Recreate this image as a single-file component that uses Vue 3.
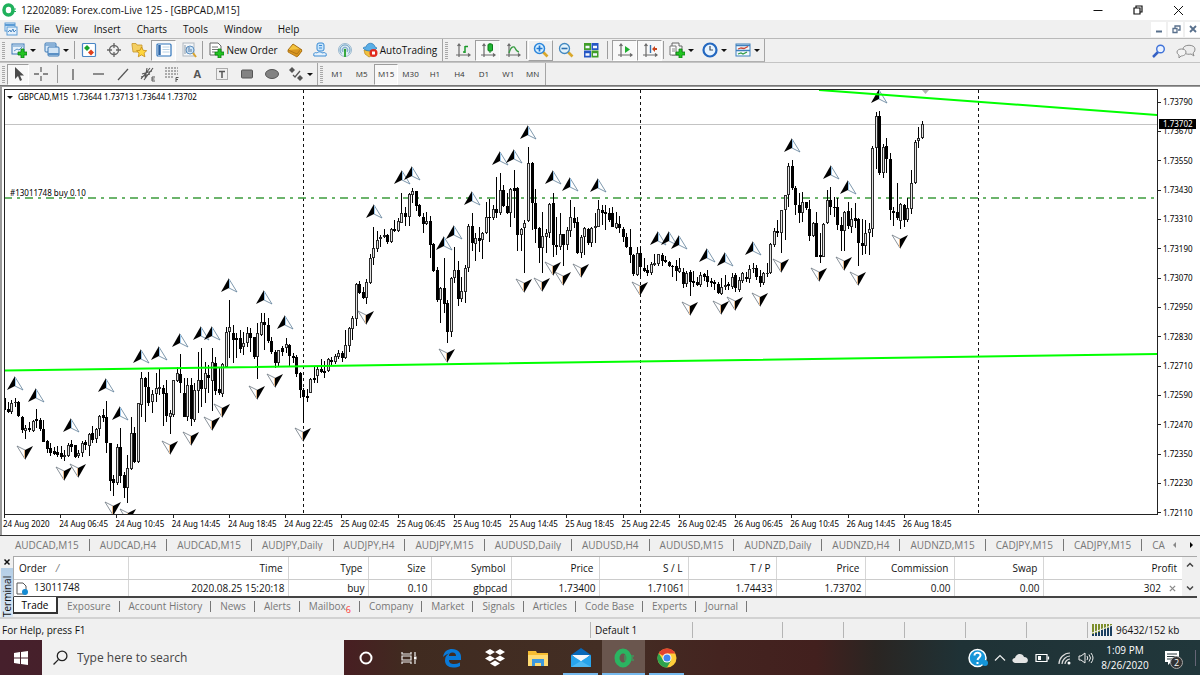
<script setup>
const menus = ['File', 'View', 'Insert', 'Charts', 'Tools', 'Window', 'Help']
const frames = ['M1', 'M5', 'M15', 'M30', 'H1', 'H4', 'D1', 'W1', 'MN']

const axes = '<path d="M4 2v13M1 13h14M2.500 4L4 2l1.500 2M13 11.500l2 1.500-2 1.500" fill="none" stroke="#6a6a6a" stroke-width="1.200"/>'
const plus = '<path d="M10 7h3v3h3v3h-3v3h-3v-3H7v-3h3z" fill="#22c322" stroke="#0b7d12" stroke-width=".8"/>'
const icons = {
  newChart: '<rect x="1" y="2" width="12" height="10" fill="#e8f2fb" stroke="#3a78b5"/><path d="M2 4h10M3 9l3-2 2 1 3-3" fill="none" stroke="#5d93c6"/>' + plus,
  profiles: '<rect x="1" y="1" width="11" height="9" rx="1" fill="#d8eafa" stroke="#3a78b5"/><path d="M1.500 3h10" stroke="#3a78b5"/><rect x="4" y="5" width="11" height="9" rx="1" fill="#d2e5f6" stroke="#3a78b5"/><path d="M4 12h11" stroke="#5a90c5" stroke-width="2"/>',
  market: '<rect x="1.500" y="1.500" width="13" height="13" rx="1" fill="#fff" stroke="#4a86c5" stroke-width="1.200"/><path d="M3 6l3-3 3 3-3 3z" fill="#18a32b"/><path d="M7 10.500l3-3 3 3-3 3z" fill="#e0401c"/>',
  target: '<circle cx="8" cy="8" r="4.500" fill="none" stroke="#666" stroke-width="1.300"/><path d="M8 1v5M8 10v5M1 8h5M10 8h5" stroke="#666" stroke-width="1.300"/>',
  favorites: '<path d="M1 3V1.500h4L6 3h5v7H2z" fill="#f4cf62" stroke="#c6952a" stroke-width=".8"/><path d="M10.500 5l1.700 3.300 3.500.4-2.600 2.400.8 3.700-3.400-1.900-3.200 1.900.7-3.700L5.500 8.700 9 8.300z" fill="#ffd63e" stroke="#c48a12" stroke-width=".8"/>',
  navigator: '<rect x="1" y="2" width="14" height="12" rx="1" fill="#fff" stroke="#2f74bb" stroke-width="1.200"/><path d="M3.500 3v10" stroke="#2862a5" stroke-width="2.500"/><path d="M6.500 5h7M6.500 7.500h7M6.500 10h7" stroke="#b9d2e6"/>',
  tester: '<rect x="2" y="1" width="11" height="13" fill="#f4f6f8" stroke="#b0b8c0"/><path d="M4 3v9M6 5v6" stroke="#8897a5"/><circle cx="9" cy="8" r="4" fill="#c6e2f8" fill-opacity=".8" stroke="#5d8fc0"/><path d="M8 5v5M10 7v3" stroke="#5676a0"/><path d="M12 11l3 4" stroke="#d9a42e" stroke-width="2"/>',
  order: '<path d="M2 1h8l3 3v9H2z" fill="#fff" stroke="#666"/><path d="M4 5h6M4 7.500h6M4 10h3" stroke="#777"/>' + plus,
  gold: '<path d="M1 8l5-6 9 6-4 6z" fill="#f4c33c" stroke="#a86f13"/><path d="M1 8l9 4 4-5M1 8v2l9 5 5-6" fill="#d99620" stroke="#a86f13" stroke-width=".8"/>',
  account: '<rect x="5" y="1" width="7" height="8" rx="2" fill="#c7e4fb" stroke="#3a8bd4"/><path d="M7 3.500h3M7 6h3" stroke="#3a8bd4"/><path d="M2 14c-1-3 1-4 3-3 2-2 4-1 5 0 3-1 5 0 4 3z" fill="#e6f2fc" stroke="#3a8bd4"/>',
  signal: '<circle cx="8" cy="8" r="6.500" fill="#dcebf2" stroke="#9bb9cf"/><path d="M4.500 11.500a5 5 0 117 0M6 10a2.800 2.800 0 114 0" fill="none" stroke="#6d9fc4"/><circle cx="8" cy="8" r="1.300" fill="#2d9c36"/><path d="M8 9v6" stroke="#38a93f" stroke-width="2"/>',
  auto: '<path d="M2 8h12l-2 5-5 2-4-3z" fill="#f2c13d" stroke="#b9851c" stroke-width=".7"/><path d="M1 6c1-1 2-1 3-1 1-5 8-5 9 0l2 1c-3 4-11 4-14 0z" fill="#5aaee6" stroke="#2576b4" stroke-width=".7"/><circle cx="11.500" cy="11" r="4" fill="#e02a1e"/><rect x="10" y="9.500" width="3" height="3" fill="#fff"/>',
  bars: axes + '<path d="M10 4v7M8 10h2M10 4.500h3" stroke="#1a9a2a" stroke-width="1.500" fill="none"/>',
  candles: axes + '<path d="M10 1v10" stroke="#158a24"/><rect x="8" y="2" width="4.500" height="7" rx="1" fill="#20b635" stroke="#0c7c19"/>',
  line: axes + '<path d="M4 11c2-7 5-7 6-5s2 4 4 4" fill="none" stroke="#3a9d44" stroke-width="1.400"/>',
  zoomIn: '<path d="M9.500 9.500l5 5" stroke="#d9a82c" stroke-width="2.600"/><circle cx="6.500" cy="6.500" r="5" fill="#d8f0ff" stroke="#2c86dc" stroke-width="1.500"/><path d="M6.500 3.500v6M3.500 6.500h6" stroke="#2077d0" stroke-width="1.700"/>',
  zoomOut: '<path d="M9.500 9.500l5 5" stroke="#d9a82c" stroke-width="2.600"/><circle cx="6.500" cy="6.500" r="5" fill="#e2f2fb" stroke="#4288c0" stroke-width="1.300"/><path d="M3.500 6.500h6" stroke="#2c70b0" stroke-width="1.600"/>',
  tile: '<rect x="1" y="1" width="7" height="7" fill="#3f9d28"/><rect x="8.500" y="1" width="7" height="7" fill="#2456c4"/><rect x="1" y="8.500" width="7" height="7" fill="#2456c4"/><rect x="8.500" y="8.500" width="7" height="7" fill="#3f9d28"/><path d="M2.500 5h4M10 5h4M2.500 12.500h4M10 12.500h4" stroke="#f3f8ff" stroke-width="2.600"/>',
  scroll: axes + '<path d="M8 4l5 3.500L8 11z" fill="#1fae2f"/>',
  shift: axes + '<path d="M8.500 3v8" stroke="#3472ae" stroke-width="1.400"/><path d="M10 7l3-3v2h2v2h-2v2z" fill="#c8441c"/>',
  indicators: '<path d="M3 1h7v3h3v9H3z" fill="#f5f5f5" stroke="#666"/><path d="M1 4h6v9H1z" fill="#fff" stroke="#777"/><path d="M3 7h3M3 9h3" stroke="#888"/>' + plus,
  clock: '<circle cx="8" cy="8" r="6.500" fill="#e8f4ff" stroke="#2468c0" stroke-width="2.200"/><path d="M8 4v4h3" fill="none" stroke="#3b4c62" stroke-width="1.200"/>',
  template: '<rect x="1" y="2" width="14" height="12" fill="#f4f9fd" stroke="#3f80bd"/><path d="M1 3.500h14M1 8.500h14" stroke="#3f80bd" stroke-width="1.500"/><path d="M3 7l3-1 3 .5 4-2" fill="none" stroke="#c84432" stroke-width="1.300"/><path d="M3 12l3-1 2 1 4-2" fill="none" stroke="#319a43" stroke-width="1.300"/>',
  cursor: '<path d="M5 1v12l3-3 2 5 2-1-2-4.500h4z" fill="#4a4a4a"/>',
  cross: '<path d="M8 1v5M8 10v5M1 8h5M10 8h5" stroke="#666" stroke-width="1.300"/>',
  vline: '<path d="M8 3v11" stroke="#555" stroke-width="1.300"/>',
  hline: '<path d="M3 8h11" stroke="#555" stroke-width="1.300"/>',
  trend: '<path d="M3 14L13 3" stroke="#555" stroke-width="1.200"/>',
  channel: '<path d="M1 13L10 2M4 14L13 2M2 8l10-3M1 11l9-3M7 2L5 13" stroke="#555" stroke-width="1.100"/><path d="M15 11h-3v4h3M12 13h2.500" fill="none" stroke="#555"/>',
  fibo: '<path d="M1 2h13M1 5h13M1 8h13M1 11h8" stroke="#666" stroke-dasharray="2 1"/><path d="M14.500 11.500H12V16M12 13.500h2" fill="none" stroke="#555"/>',
  label: '<rect x="2.500" y="2.500" width="11" height="11" fill="none" stroke="#666" stroke-dasharray="1 1"/><path d="M5 5.500h6M8 5.500V12" stroke="#555" stroke-width="1.500"/>',
  rect: '<rect x="2.500" y="4" width="11" height="8" rx="1" fill="#828282" stroke="#555"/>',
  ellipse: '<ellipse cx="8" cy="8" rx="6.500" ry="4.500" fill="#828282" stroke="#555"/>',
  arrows: '<path d="M4 1l3 3-3 3-3-3z" fill="#555"/><path d="M12 9l3 3-3 3-3-3z" fill="#555"/><path d="M5 9l2 2 5-6" fill="none" stroke="#555" stroke-width="1.300"/>'
}

const group1 = [
  { id: 'newChart', t: 'New chart', drop: true }, { id: 'profiles', t: 'Profiles', drop: true }, { sep: true },
  { id: 'market', t: 'Market Watch' }, { id: 'target', t: 'Data Window' }, { id: 'favorites', t: 'Navigator' },
  { id: 'navigator', t: 'Terminal', on: true }, { id: 'tester', t: 'Strategy Tester' }, { sep: true },
  { id: 'order', t: 'New Order', text: true }, { id: 'gold', t: 'MetaEditor' }, { id: 'account', t: 'Account' },
  { id: 'signal', t: 'Signals' }, { id: 'auto', t: 'AutoTrading', text: true }
]
const group2 = [
  { id: 'bars', t: 'Bar chart' }, { id: 'candles', t: 'Candlesticks', on: true }, { id: 'line', t: 'Line chart' }, { sep: true },
  { id: 'zoomIn', t: 'Zoom in', up: true }, { id: 'zoomOut', t: 'Zoom out' }, { id: 'tile', t: 'Tile windows' }, { sep: true, big: true },
  { id: 'scroll', t: 'Auto scroll', on: true }, { id: 'shift', t: 'Chart shift', on: true }, { sep: true },
  { id: 'indicators', t: 'Indicators', drop: true }, { id: 'clock', t: 'Periods', drop: true }, { id: 'template', t: 'Templates', drop: true }
]
const tools = [
  { id: 'cursor', on: true }, { id: 'cross' }, { sep: true, big: true }, { id: 'vline' }, { id: 'hline' }, { id: 'trend' },
  { id: 'channel' }, { id: 'fibo' }, { id: 'text' }, { id: 'label' }, { id: 'rect' }, { id: 'ellipse' }, { id: 'arrows', drop: true }
]

// One candle per entry: high, body top, body bottom, low, 1 = falling
const series = `397 398 410 412 1,402 409 412 413 1,400 403 412 414 0,398 402 403 407 0,401 402 416 417 1,416 417 430 433 1,425 428 431 439 0,422 428 430 432 1,420 421 431 432 0,409 419 421 428 1,418 420 429 431 1,420 429 442 442 1,440 441 449 453 1,443 448 453 456 1,447 451 454 455 1,446 452 455 457 1,446 453 457 459 1,450 455 457 461 0,443 445 456 457 0,440 444 447 452 1,445 445 457 458 1,450 453 456 458 0,441 443 453 457 0,440 442 445 450 1,433 434 446 456 0,426 433 440 443 1,428 429 439 443 0,415 416 429 436 0,409 415 418 422 1,401 417 443 453 1,443 443 481 491 1,475 479 483 496 1,444 447 483 485 0,428 447 476 483 1,472 475 488 498 1,455 468 488 503 0,417 433 469 470 0,427 433 462 463 1,403 403 462 463 0,372 378 405 417 0,377 378 387 422 1,372 387 403 406 1,390 394 402 413 0,373 388 394 402 0,369 387 389 395 0,385 388 394 426 1,380 393 416 422 1,410 413 417 434 0,380 380 415 417 0,367 373 381 382 0,354 374 383 393 1,378 393 417 417 1,378 385 417 421 0,378 385 419 426 1,383 390 420 422 0,352 380 391 413 0,348 380 389 407 1,362 373 389 403 0,365 375 378 393 1,348 362 381 411 0,357 363 391 395 1,367 389 393 395 1,363 364 394 397 0,327 332 367 367 0,300 327 332 358 0,325 333 340 363 1,333 338 340 358 1,330 338 349 353 1,332 343 347 355 0,327 333 343 347 0,328 333 338 352 1,337 337 357 359 1,323 333 357 379 0,313 322 335 336 0,313 322 325 350 1,318 325 341 343 1,337 341 352 354 1,350 352 363 368 1,350 350 363 367 0,346 348 352 356 1,338 344 348 353 0,344 345 356 366 1,353 356 358 363 1,355 357 374 377 1,372 373 390 398 1,388 390 397 423 1,389 396 398 402 1,378 379 393 393 0,366 378 380 383 1,366 369 376 383 0,359 369 372 373 1,361 371 373 378 1,358 359 371 372 0,357 360 362 365 1,354 356 362 364 0,350 353 357 359 0,351 353 358 362 1,330 345 358 359 0,327 328 346 352 0,316 318 329 340 0,283 284 319 326 0,281 284 293 294 1,287 292 298 299 1,279 282 298 304 0,254 258 283 284 0,227 248 258 265 0,231 240 249 252 0,235 237 239 247 0,229 235 237 238 0,234 235 242 244 1,228 229 242 243 0,220 229 231 232 1,218 221 231 232 0,193 213 223 223 0,207 213 217 226 1,193 194 217 226 0,188 191 195 203 0,191 191 206 211 1,204 205 216 217 1,213 217 224 233 1,212 221 224 225 0,216 221 245 258 1,243 244 271 272 1,267 270 300 302 1,287 288 300 323 0,258 288 304 313 1,300 303 332 343 1,277 278 332 337 0,247 270 278 283 0,261 270 299 306 1,277 291 299 302 0,265 268 292 303 0,224 226 268 272 0,213 226 243 251 1,233 238 244 261 0,227 238 241 252 1,232 233 240 259 0,202 217 233 234 0,199 217 218 242 1,205 209 218 220 0,177 209 213 218 1,173 190 213 215 0,185 190 206 207 1,193 206 213 214 1,188 189 213 227 0,170 188 191 218 1,187 188 235 251 1,228 229 235 251 0,220 223 228 273 0,147 163 221 222 0,162 163 203 230 1,189 203 229 243 1,227 228 248 263 1,212 236 248 273 0,229 233 237 253 0,203 204 233 238 0,193 203 245 257 1,217 245 247 255 1,213 234 247 250 0,234 234 245 266 1,227 230 245 250 0,200 217 231 237 0,207 218 223 228 1,217 222 253 254 1,235 237 253 258 0,227 228 237 255 0,228 229 243 245 1,227 228 243 247 0,213 226 228 243 0,200 209 227 227 0,205 210 213 225 1,205 212 214 230 1,208 213 220 222 1,207 213 227 227 1,212 223 228 229 0,216 224 228 233 1,227 229 237 242 1,233 237 247 248 1,229 247 255 263 1,254 255 274 276 1,247 253 275 276 0,247 253 267 277 1,258 268 271 272 1,265 270 273 276 1,262 264 273 275 0,254 263 265 266 0,254 254 264 266 0,253 255 261 266 1,256 260 262 263 1,261 262 266 267 1,265 266 267 277 1,260 266 271 281 1,258 268 272 273 0,268 272 284 288 1,271 273 284 287 0,270 272 282 296 1,271 281 283 287 1,277 282 285 286 1,272 275 285 287 0,273 274 277 281 1,270 276 282 287 1,278 281 283 287 1,280 282 284 290 1,282 284 293 294 1,278 287 294 295 0,275 285 287 290 0,282 284 286 290 1,273 277 287 289 0,273 275 288 292 1,277 280 290 292 0,272 273 281 283 0,272 277 279 282 1,265 269 279 283 0,263 268 269 273 0,265 268 277 280 1,270 276 283 287 1,272 273 283 285 0,263 273 274 277 0,243 244 273 274 0,228 231 245 247 0,220 231 233 237 1,210 210 233 253 0,195 195 210 240 0,163 166 195 207 0,160 166 188 190 1,186 188 205 215 1,193 205 213 223 1,192 202 213 222 0,202 202 208 210 1,200 209 236 241 1,222 223 236 237 0,212 223 257 257 1,233 255 257 263 1,223 224 257 257 0,190 200 223 224 0,187 200 207 215 1,197 207 208 217 1,198 207 225 230 1,217 225 231 251 1,211 212 231 251 0,202 211 226 229 1,208 219 227 233 0,203 218 221 228 1,218 219 243 266 1,219 243 246 255 1,220 233 246 254 0,223 229 233 255 0,146 148 229 237 0,112 116 148 169 0,111 116 173 175 1,144 147 173 178 0,138 146 159 173 1,153 159 210 220 1,207 211 213 226 1,183 212 218 220 1,203 204 221 229 0,204 205 220 227 1,198 208 220 222 0,170 183 209 214 0,140 142 183 184 0,127 138 141 148 0,121 124 138 139 0`
const candles = series.split(',').map((row, i) => {
  const [high, top, bottom, low, down] = row.split(' ').map(Number)
  return { x: Math.round(4.4 + i * 3.514), high, top, low, down, h: Math.max(1, bottom - top) }
})
const ups = [[15, 376], [36, 388], [71, 418], [106, 378], [120, 406], [141, 349], [159, 346], [180, 333], [201, 326], [212, 326], [229, 278], [264, 290], [285, 315], [374, 204], [402, 170], [412, 166], [472, 191], [444, 236], [454, 225], [500, 151], [514, 149], [528, 125], [553, 170], [570, 177], [598, 178], [658, 231], [669, 231], [679, 235], [707, 248], [725, 252], [753, 241], [792, 138], [831, 165], [848, 180], [879, 89]]
const downs = [[25, 446], [64, 467], [78, 464], [113, 502], [128, 509], [170, 441], [191, 432], [212, 417], [222, 404], [257, 386], [275, 374], [303, 428], [366, 311], [447, 349], [524, 279], [542, 278], [553, 262], [563, 272], [581, 264], [640, 282], [690, 302], [721, 301], [735, 297], [760, 293], [781, 259], [819, 268], [844, 257], [858, 272], [900, 235]]

const prices = ['1.73790', '1.73670', '1.73550', '1.73430', '1.73310', '1.73190', '1.73070', '1.72950', '1.72830', '1.72710', '1.72590', '1.72470', '1.72350', '1.72230', '1.72110']
const times = ['24 Aug 2020', '24 Aug 06:45', '24 Aug 10:45', '24 Aug 14:45', '24 Aug 18:45', '24 Aug 22:45', '25 Aug 02:45', '25 Aug 06:45', '25 Aug 10:45', '25 Aug 14:45', '25 Aug 18:45', '25 Aug 22:45', '26 Aug 02:45', '26 Aug 06:45', '26 Aug 10:45', '26 Aug 14:45', '26 Aug 18:45']
const charts = ['AUDCAD,M15', 'AUDCAD,H4', 'AUDCAD,M15', 'AUDJPY,Daily', 'AUDJPY,H4', 'AUDJPY,M15', 'AUDUSD,Daily', 'AUDUSD,H4', 'AUDUSD,M15', 'AUDNZD,Daily', 'AUDNZD,H4', 'AUDNZD,M15', 'CADJPY,M15', 'CADJPY,M15', 'CA']
const heads = ['Order', 'Time', 'Type', 'Size', 'Symbol', 'Price', 'S / L', 'T / P', 'Price', 'Commission', 'Swap', 'Profit']
const trade = ['13011748', '2020.08.25 15:20:18', 'buy', '0.10', 'gbpcad', '1.73400', '1.71061', '1.74433', '1.73702', '0.00', '0.00', '302']
const panels = ['Trade', 'Exposure', 'Account History', 'News', 'Alerts', 'Mailbox', 'Company', 'Market', 'Signals', 'Articles', 'Code Base', 'Experts', 'Journal']
</script>

<template>
  <div class="desktop">
    <header class="title">
      <svg class="logo" viewBox="0 0 16 16"><ellipse cx="7.500" cy="8" rx="4.500" ry="5" fill="none" stroke="#20b15c" stroke-width="3.500" /><path d="M10 7h5M10 9.500h5" stroke="#20b15c" stroke-width="1.200" /></svg>
      <span class="name">12202089: Forex.com-Live 125 - [GBPCAD,M15]</span>
      <button class="wbtn" aria-label="Minimize"><svg viewBox="0 0 12 12"><path d="M1.500 6.500h9" stroke="#111" /></svg></button>
      <button class="wbtn" aria-label="Restore"><svg viewBox="0 0 12 12"><path d="M2 4h6v6H2zM4 4V2h6v6H8" fill="none" stroke="#111" stroke-width="1.200" /></svg></button>
      <button class="wbtn" aria-label="Close"><svg viewBox="0 0 12 12"><path d="M2 2l9 9M11 2l-9 9" stroke="#111" /></svg></button>
    </header>

    <nav class="menu">
      <svg class="doc" viewBox="0 0 14 14"><rect x="1" y="1" width="10" height="8" fill="#eef6fd" stroke="#5b9bd5" /><path d="M1 3h10" stroke="#5b9bd5" stroke-width="2" /><rect x="3" y="5" width="10" height="8" fill="#e4f0fb" stroke="#5b9bd5" /><path d="M4 10l2-2 1 2 2-3 1 3 2-2" fill="none" stroke="#4a86c0" /></svg>
      <button v-for="m in menus" :key="m">{{ m }}</button>
      <span class="mdi">
        <button aria-label="Minimize chart"><svg viewBox="0 0 10 10"><path d="M2 7.500h6" stroke="#59708c" stroke-width="2" /></svg></button>
        <button aria-label="Restore chart"><svg viewBox="0 0 10 10"><path d="M2 4.500h4v4H2zM4 4V2h5v4H7" fill="none" stroke="#59708c" stroke-width="1.300" /></svg></button>
        <button aria-label="Close chart"><svg viewBox="0 0 10 10"><path d="M2 2l6 6M8 2L2 8" stroke="#59708c" stroke-width="1.800" /></svg></button>
      </span>
    </nav>

    <div class="bar">
      <div v-for="(g, n) in [group1, group2]" :key="n" class="group">
        <i class="grip"></i>
        <template v-for="(b, i) in g" :key="i">
          <i v-if="b.sep" class="sep" :class="{ big: b.big }"></i>
          <button v-else :class="{ on: b.on, up: b.up, drop: b.drop, text: b.text }" :aria-label="b.t">
            <svg viewBox="0 0 16 16" v-html="icons[b.id]"></svg><span v-if="b.text">{{ b.t }}</span><i v-if="b.drop" class="caret"></i>
          </button>
        </template>
      </div>
      <div class="right">
        <svg viewBox="0 0 14 14"><path d="M6 8l-5 5" stroke="#3561c4" stroke-width="2.500" /><circle cx="8.500" cy="5" r="3.800" fill="#eaf2ff" stroke="#3f72d8" stroke-width="1.400" /></svg>
        <svg class="chat" viewBox="0 0 20 14"><path d="M7 5c0-5 12-5 12 0 0 3-2 4-2 4l1 3-3-2c-5 1-8-1-8-5z" fill="#ececec" stroke="#8c8c8c" /><path d="M1 8c0-4 9-4 9 0s-5 4-5 4l-2 2v-3S1 10 1 8z" fill="#f3f3f3" stroke="#8c8c8c" /></svg>
      </div>
    </div>

    <div class="bar draw">
      <div class="group tools">
        <i class="grip"></i>
        <template v-for="(b, i) in tools" :key="i">
          <i v-if="b.sep" class="sep big"></i>
          <button v-else :class="{ on: b.on, drop: b.drop }" :aria-label="b.id">
            <b v-if="b.id === 'text'">A</b><svg v-else viewBox="0 0 16 16" v-html="icons[b.id]"></svg><i v-if="b.drop" class="caret"></i>
          </button>
        </template>
      </div>
      <div class="group frames">
        <i class="grip"></i>
        <button v-for="f in frames" :key="f" :class="{ on: f === 'M15' }">{{ f }}</button>
      </div>
    </div>

    <main class="chart">
      <div class="plot">
        <svg class="canvas" viewBox="5 90 1152 424" preserveAspectRatio="none">
          <defs>
            <g id="up"><path d="M0 0L-8 14L0 10z" fill="#000" /><path d="M0 1L8 14L0 10" fill="#fff" stroke="#5d7d98" stroke-width=".8" /><path d="M.5 2v8" stroke="#9cc7ea" /></g>
            <g id="down"><path d="M0 14L8 0L0 4z" fill="#000" /><path d="M0 13L-8 0L0 4" fill="#fff" stroke="#6c7680" stroke-width=".8" /><path d="M-.5 4v8" stroke="#e5b98c" /></g>
          </defs>
          <path d="M303.500 90v425M640.500 90v425M978.500 90v425" stroke="#111" stroke-dasharray="3 3" />
          <path d="M4 124.500h1154" stroke="#c3c3c3" />
          <path d="M4 198h1154" stroke="#3c9c3c" stroke-width="1.500" stroke-dasharray="8 5 3 5" />
          <g shape-rendering="crispEdges">
            <template v-for="c in candles" :key="c.x">
              <rect :x="c.x" :y="c.high" width="1" :height="c.low - c.high" />
              <rect :x="c.x - 1" :y="c.top" width="3" :height="c.h" :fill="c.down ? '#000' : '#2c2c2c'" />
              <rect v-if="!c.down && c.h > 2" :x="c.x" :y="c.top + 1" width="1" :height="c.h - 2" fill="#e2e2e2" />
            </template>
          </g>
          <use v-for="([x, y], i) in ups" :key="'u' + i" href="#up" :x="x" :y="y" />
          <use v-for="([x, y], i) in downs" :key="'d' + i" href="#down" :x="x" :y="y" />
          <path d="M4 370.500L1158 354M819 90L1158 115" stroke="#0f0" stroke-width="2" fill="none" />
          <path d="M922 90h7l-3.500 4z" fill="#b4b4b4" />
        </svg>
        <p class="quote"><i class="caret"></i>GBPCAD,M15&nbsp; 1.73644 1.73713 1.73644 1.73702</p>
        <p class="position">#13011748 buy 0.10</p>
      </div>
      <div class="prices">
        <span v-for="p in prices" :key="p">{{ p }}</span>
        <strong>1.73702</strong>
      </div>
      <div class="times"><span v-for="t in times" :key="t">{{ t }}</span></div>
    </main>

    <nav class="charts">
      <div class="strip"><button v-for="(c, i) in charts" :key="i">{{ c }}</button></div>
      <button class="arrow off" aria-label="Scroll left"></button>
      <button class="arrow" aria-label="Scroll right"></button>
    </nav>

    <section class="terminal">
      <div class="side"><button aria-label="Close terminal"><svg viewBox="0 0 8 8"><path d="M1.500 1.500l5 5M6.500 1.500l-5 5" stroke="#111" stroke-width="1.500" /></svg></button><span>Terminal</span></div>
      <div class="body">
        <div class="grid">
          <table>
            <thead><tr><th v-for="(h, i) in heads" :key="i" :class="'c' + i">{{ h }}<em v-if="!i">/</em></th></tr></thead>
            <tbody><tr>
              <td v-for="(v, i) in trade" :key="i">
                <svg v-if="!i" class="paper" viewBox="0 0 12 13"><path d="M1 1h6l3 3v8H1z" fill="#fff" stroke="#555" /><circle cx="9" cy="10" r="3" fill="#168bd2" /></svg>{{ v }}<button v-if="i === 11" aria-label="Close order"><svg viewBox="0 0 8 8"><path d="M1 1l6 6M7 1L1 7" stroke="#8a8a8a" stroke-width="1.500" /></svg></button>
              </td>
            </tr></tbody>
          </table>
          <div class="scroll"><svg viewBox="0 0 8 8"><path d="M1 5.500l3-3 3 3" fill="none" stroke="#444" stroke-width="1.500" /></svg><svg viewBox="0 0 8 8"><path d="M1 2.500l3 3 3-3" fill="none" stroke="#444" stroke-width="1.500" /></svg></div>
        </div>
        <nav class="panels"><button v-for="p in panels" :key="p" :class="{ active: p === 'Trade' }">{{ p }}<sub v-if="p === 'Mailbox'">6</sub></button></nav>
      </div>
    </section>

    <footer class="status">
      <span class="help">For Help, press F1</span><span class="profile">Default 1</span><span class="s1"></span><span class="s2"></span><span class="s2"></span><span class="s2"></span><span class="s2"></span><span class="s2"></span>
      <span class="net"><svg viewBox="0 0 21 12"><path d="M1 0v12M4 0v12M7 0v12M10 0v12M13 0v12M16 0v12M19 0v12" stroke="#7d8f2c" stroke-width="2" /><path d="M1 10v2M4 9v3M7 8v4M10 6v6M13 5v7M16 4v8M19 2v10" stroke="#1b3f60" stroke-width="2" /><path d="M0 9L21 1" stroke="#f0f0f0" /></svg>96432/152 kb</span>
    </footer>

    <div class="taskbar">
      <button class="start" aria-label="Start"><svg viewBox="0 0 14 14"><path d="M0 2l6-1v5.500H0zM7 1l7-1v6.500H7zM0 7.500h6V13l-6-1zM7 7.500h7V14l-7-1z" fill="#fff" /></svg></button>
      <label class="search"><svg viewBox="0 0 14 14"><circle cx="8.500" cy="5.500" r="4.500" fill="none" stroke="#222" stroke-width="1.200" /><path d="M5 9l-4.500 4.500" stroke="#222" stroke-width="1.200" /></svg><input type="text" placeholder="Type here to search" aria-label="Type here to search"></label>
      <button class="app" aria-label="Cortana"><svg viewBox="0 0 20 20"><circle cx="10" cy="10" r="5.500" fill="none" stroke="#fff" stroke-width="2" /></svg></button>
      <button class="app" aria-label="Task view"><svg viewBox="0 0 20 20"><path d="M3 4v2h9V4M3 16v-2h9v2M3 8h9v4H3zM16 4v4M16 12v4" fill="none" stroke="#eee" stroke-width="1.200" /><path d="M15 8.500h2.500v3H15z" fill="#fff" /></svg></button>
      <button class="app" aria-label="Edge"><svg viewBox="0 0 20 20"><path d="M1 9C2 3 6 1 10 1c6 0 9 4 9 8v3H7c0 3 2 4 5 4 2 0 4-.5 6-1.500V18c-2 1-4 1.500-7 1.500-5 0-8-3-8-7 0-4 2-6 4-7-2 .5-5 2-6 3.500zM7 8h7c0-2-1-3.500-3.500-3.500S7 6 7 8z" fill="#0a7ad8" /></svg></button>
      <button class="app" aria-label="Dropbox"><svg viewBox="0 0 20 20"><path d="M5 1l5 3-5 3-5-3zM15 1l5 3-5 3-5-3zM5 7.500l5 3-5 3-5-3zM15 7.500l5 3-5 3-5-3zM10 12.500l5 3-5 3-5-3z" fill="#fff" /></svg></button>
      <button class="app" aria-label="File Explorer"><svg viewBox="0 0 20 20"><path d="M0 3h8l1 2h11v13H0z" fill="#f6bd32" /><path d="M0 7h20v11H0z" fill="#ffdc74" /><path d="M4 18v-7h12v7h-3v-3H7v3z" fill="#3e9ade" /></svg></button>
      <button class="app open" aria-label="Mail"><svg viewBox="0 0 20 20"><path d="M0 7l10-7 10 7v12H0z" fill="#0868b8" /><path d="M1 7h18l-9 8z" fill="#f2f6fa" /><path d="M0 7l10 6 10-6v12H0z" fill="#28a4ec" /><path d="M0 19l10-6 10 6z" fill="#4cb8f3" /><path d="M3 7h14l-7 6z" fill="#f6f8fb" /></svg></button>
      <button class="app open current" aria-label="Forex.com"><svg viewBox="0 0 20 20"><ellipse cx="9" cy="10" rx="6" ry="7" fill="none" stroke="#2bb461" stroke-width="5" /><path d="M10 8h10M10 10h9M10 12h10" stroke="#2bb461" stroke-width="1.200" /></svg></button>
      <button class="app open" aria-label="Chrome"><svg viewBox="0 0 20 20"><circle cx="10" cy="10" r="9.500" fill="#ffcd3a" /><path d="M10 10L1.700 5.200A9.500 9.500 0 0118.300 5.500L10 5.500z" fill="#e4432f" /><path d="M1.700 5.200A9.500 9.500 0 0010 19.500l4-7-4 1.500-4-2z" fill="#2ea34e" /><circle cx="10" cy="10" r="4.500" fill="#fff" /><circle cx="10" cy="10" r="3.500" fill="#4384ef" /></svg></button>
      <div class="tray">
        <svg viewBox="0 0 20 20"><circle cx="9.500" cy="10" r="8.500" fill="#1595d8" stroke="#fff" stroke-width="1.500" /><path d="M6.500 7.500c0-4 6.500-3.500 6 0-.2 2-2.500 2-3 4.500M9.500 14v2" fill="none" stroke="#fff" stroke-width="2" /><circle cx="17" cy="15" r="3" fill="#1595d8" /></svg>
        <svg class="small" viewBox="0 0 12 12"><path d="M1 8.500l5-5 5 5" fill="none" stroke="#eee" stroke-width="1.200" /></svg>
        <svg class="mid" viewBox="0 0 16 12"><path d="M3 11c-4-1-3-5 0-5 1-5 8-5 9-1 5 0 5 6 1 6z" fill="#e4e4e4" /></svg>
        <svg class="mid" viewBox="0 0 16 12"><path d="M2 2.500h11v7H2zM14.500 4.500v3" fill="none" stroke="#fff" stroke-width="1.200" /><path d="M4 4h3v4H4z" fill="#fff" /></svg>
        <svg class="mid" viewBox="0 0 16 14"><path d="M3 13C3 7 8 2 14 2M6 13c0-4 4-8 8-8M9 13c0-2 2-5 5-5" fill="none" stroke="#ddd" stroke-width="1.200" /><circle cx="13" cy="12" r="1.500" fill="#fff" /></svg>
        <svg class="mid" viewBox="0 0 16 14"><path d="M1 5h2l4-3v10L3 9H1z" fill="none" stroke="#eee" /><path d="M9 5q1.500 2 0 4M11 3.500q3 3.500 0 7M13 2q4 5 0 10" fill="none" stroke="#eee" /></svg>
        <time>1:09 PM<br>8/26/2020</time>
        <span class="note"><svg viewBox="0 0 16 16"><path d="M1 1h14v11H7l-3 3v-3H1z" fill="#fff" /><path d="M3 4h10M3 6.500h10M3 9h7" stroke="#2a3a3e" /></svg><b>2</b></span>
      </div>
    </div>
  </div>
</template>

<style>
html, body { margin: 0; background: #f0f0f0; }
</style>

<style scoped>
* { box-sizing: border-box; }
.desktop { display: flex; flex-direction: column; min-height: 100vh; overflow: hidden; background: #f0f0f0; color: #111; font: 10px/14px "Open Sans", "Noto Sans", sans-serif; }
button { display: inline-flex; align-items: center; justify-content: center; margin: 0; padding: 0; border: 0; background: none; color: inherit; font: inherit; white-space: nowrap; }
p { margin: 0; }
svg { display: block; flex: none; }

.title { display: flex; align-items: center; height: 20px; background: #fff; }
.logo { width: 16px; height: 16px; margin: 0 4px 0 1px; }
.name { flex: 1; }
.wbtn { width: 40px; height: 18px; }
.wbtn:last-child { margin-right: 2px; }
.wbtn svg { width: 12px; height: 12px; }

.menu { display: flex; align-items: center; gap: 16px; height: 18px; padding-left: 4px; }
.doc { width: 14px; height: 14px; margin-right: -10px; }
.mdi { display: flex; gap: 2px; margin-left: auto; }
.mdi button { width: 15px; height: 15px; background: #fff; }
.mdi svg { width: 10px; height: 10px; }

.bar { display: flex; height: 24px; border-top: 1px solid #b9b9b9; }
.bar.draw { border-top-color: #c4c4c4; height: 23px; }
.group { display: flex; align-items: center; border-right: 1px solid #a5a5a5; }
.bar:not(.draw) .group { border-bottom: 1px solid #b0b0b0; }
.grip { width: 3px; height: 17px; margin: 0 2px; background: repeating-linear-gradient(#a8a8a8 0 1px, #f0f0f0 1px 2px); }
.group button { width: 25px; height: 21px; border: 1px solid transparent; }
.group button svg { width: 16px; height: 16px; }
.group .drop { width: 33px; gap: 3px; }
.group .text { width: 78px; gap: 2px; }
.group .text:last-child { width: 85px; }
.group .on { background: #f8f8f8; border-color: #9d9d9d #fff #fff #9d9d9d; }
.group .up { border-color: #fff #a0a0a0 #a0a0a0 #fff; }
.caret { width: 0; border: 3px solid transparent; border-top-color: #111; border-bottom: 0; }
.sep { width: 1px; height: 18px; margin: 0 1px; background: #9c9c9c; }
.sep.big { margin: 0 4px; }
.draw .sep.big { margin: 0 3px; }
.right { display: flex; align-items: center; gap: 10px; margin-left: auto; padding-right: 4px; }
.right svg { width: 14px; height: 14px; }
.right .chat { width: 20px; }
.draw b { color: #555; font: bold 11px/14px "Open Sans", sans-serif; }
.tools { width: 318px; }
.frames { width: 228px; }
.draw .group button { flex: 1; }
.draw .group.tools .drop { flex: none; width: 33px; }
.draw .group.tools .on { flex: none; width: 22px; }
.draw .frames button { color: #333; font-size: 8px; }

.chart { position: relative; flex: 1; display: grid; grid-template: 1fr 20px / 1fr 42px; min-height: 300px; padding: 3px 0 0 4px; background: #fff; border-top: 1px solid #777; box-shadow: inset 2px 1px #9b9b9b; font: 8px/10px "Noto Sans", sans-serif; color: #000; }
.plot { position: relative; min-height: 0; border: 1px solid #222; }
.canvas { position: absolute; inset: 0; width: 100%; height: 100%; overflow: hidden; }
.quote { position: absolute; left: 2px; top: 2px; display: flex; align-items: center; gap: 5px; }
.position { position: absolute; left: 5px; top: 23%; }
.prices { grid-row: 1 / 3; grid-column: 2; position: relative; display: flex; flex-direction: column; justify-content: space-between; padding: 8px 0 17px; }
.prices span { display: flex; align-items: center; gap: 2px; }
.prices span::before { content: ""; width: 3px; height: 1px; background: #222; }
.prices strong { position: absolute; top: 30px; left: 1px; width: 37px; padding-left: 4px; background: #000; color: #fff; font-weight: 400; }
.times { display: flex; padding-top: 4px; }
.times span { position: relative; flex: none; width: 4.873%; margin-left: -1px; margin-right: 1px; white-space: nowrap; }
.times span::before { content: ""; position: absolute; left: 1px; top: -4px; width: 1px; height: 3px; background: #222; }

.charts { display: flex; align-items: center; height: 18px; border-top: 1px solid #333; color: #777; }
.strip { flex: 1; display: flex; overflow: hidden; padding-left: 5px; }
.strip button { flex: none; padding: 0 10px; border-right: 1px solid #777; height: 12px; }
.strip button:last-child { padding-right: 0; border-right: 0; }
.arrow { width: 17px; height: 12px; }
.arrow::after { content: ""; border: 3px solid transparent; border-left-color: #000; border-right: 0; }
.arrow.off::after { transform: rotate(180deg); border-left-color: #888; }

.terminal { display: flex; height: 63px; margin-top: 3px; border-bottom: 2px solid #d2d2d2; }
.side { display: flex; flex-direction: column; align-items: center; width: 13px; }
.side svg { width: 8px; height: 8px; }
.side button { height: 12px; }
.side span { flex: 1; width: 12px; line-height: 12px; background: linear-gradient(#dbe8f4, #b4cee6); writing-mode: vertical-rl; transform: rotate(180deg); }
.body { flex: 1; }
.grid { display: flex; height: 42px; border-top: 1px solid #aaa; border-left: 1px solid #aaa; border-bottom: 2px solid #444; background: #fff; margin-right: 3px; }
table { flex: 1; width: 0; table-layout: fixed; border-collapse: collapse; }
th, td { padding: 0 3px 0 0; border-right: 1px solid #d6d6d6; text-align: right; font-weight: 400; white-space: nowrap; line-height: 14px; }
th { height: 22px; padding-right: 5px; border-bottom: 1px solid #ccc; }
td { height: 17px; }
th:first-child { padding-left: 5px; text-align: left; }
td:first-child { text-align: left; }
th em { margin-left: 9px; color: #777; }
th:last-child, td:last-child { border-right: 0; }
.c0 { width: 114px; } .c1 { width: 160px; } .c2 { width: 80px; } .c3 { width: 63px; } .c4 { width: 80px; }
.c5, .c7 { width: 88px; }
.c6, .c8, .c9, .c10 { width: 89px; }
.paper { display: inline-block; width: 12px; height: 13px; margin: 0 6px 0 2px; vertical-align: middle; }
td button { margin: 0 3px 0 8px; }
td button svg { width: 7px; height: 7px; }
.scroll { display: flex; flex-direction: column; justify-content: space-between; align-items: center; width: 15px; padding: 4px 0; background: #f0f0f0; }
.scroll svg { width: 8px; height: 8px; }
.panels { display: flex; color: #777; }
.panels button { position: relative; height: 16px; padding: 0 9px; }
.panels button:not(.active)::after { content: ""; position: absolute; right: 0; top: 3px; height: 11px; border-right: 1px solid #777; }
.panels .active { width: 45px; height: 17px; margin-top: -1px; padding: 0; background: #fff; color: #000; border: 1px solid #333; border-top: 0; border-width: 0 2px 2px 1px; }
.panels sub { color: #f33; font-size: 9px; line-height: 8px; align-self: flex-end; }

.status { display: flex; align-items: center; height: 21px; }
.status span { height: 16px; line-height: 16px; border-left: 1px solid #b5b5b5; }
.status .help { flex: 1; border: 0; padding-left: 2px; }
.status .profile { width: 102px; padding-left: 4px; }
.status .s1 { width: 90px; }
.status .s2 { width: 61px; }
.status .net { display: flex; align-items: center; gap: 3px; width: 113px; padding-left: 4px; }
.net svg { width: 21px; height: 12px; }

.taskbar { display: flex; height: 35px; background: linear-gradient(90deg, #46202c 0, #471f22 29%, #402b20 34%, #432e24 50%, #442420 60%, #42201e 68%, #2a2522 73%, #1f3236 80%, #21373b 100%); color: #fff; }
.start { width: 42px; }
.start svg { width: 14px; height: 14px; }
.search { display: flex; align-items: center; gap: 9px; width: 302px; padding-left: 11px; background: #f1f1f1; }
.search svg { width: 15px; height: 15px; }
.search input { flex: 1; min-width: 0; border: 0; padding: 0; background: none; color: #333; font: 12px/18px "Open Sans", sans-serif; }
.search input::placeholder { color: #444; opacity: 1; }
.app { position: relative; width: 43px; }
.app svg { width: 20px; height: 20px; }
.app.open::after { content: ""; position: absolute; left: 4px; right: 4px; bottom: 0; height: 2px; background: #76b9ed; }
.app.current { background: #6a564e; }
.app.current::after { left: 0; right: 0; }
.tray { display: flex; align-items: center; gap: 6px; margin-left: auto; padding-right: 4px; }
.tray svg { width: 20px; height: 20px; }
.tray .small { width: 12px; height: 12px; }
.tray .mid { width: 16px; height: 14px; }
time { width: 50px; text-align: center; line-height: 15px; }
.note { position: relative; width: 40px; padding-left: 8px; border-right: 1px solid #667; }
.tray .note svg { width: 16px; height: 16px; }
.note b { position: absolute; left: 14px; top: 6px; width: 13px; height: 13px; border-radius: 50%; border: 1px solid #aaa; background: #333; text-align: center; font: 9px/11px "Open Sans", sans-serif; }
</style>
